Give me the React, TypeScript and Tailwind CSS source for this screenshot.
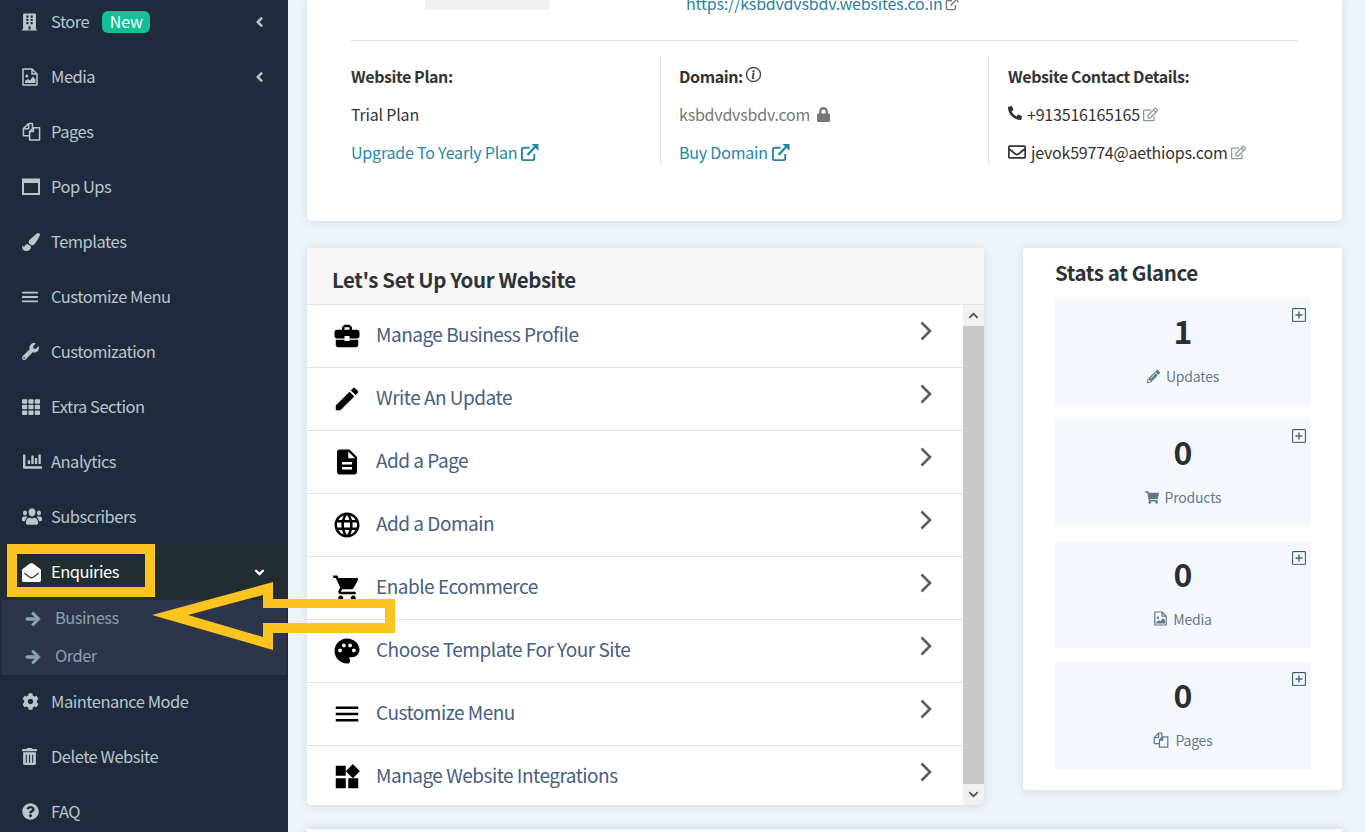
import React from "react";
import { FaBuilding, FaPaintBrush, FaBars, FaWrench, FaTh, FaChartBar, FaUsers, FaEnvelopeOpen, FaArrowRight, FaCog, FaTrashAlt, FaQuestionCircle, FaAngleLeft, FaAngleDown, FaPhoneAlt, FaRegEnvelope, FaRegEdit, FaLock, FaPencilAlt, FaShoppingCart, FaChevronUp, FaChevronDown } from "react-icons/fa";
import { BsInfoCircle, BsPlusSquare } from "react-icons/bs";
import { MdBusinessCenter, MdEdit, MdDescription, MdLanguage, MdShoppingCart, MdPalette, MdMenu, MdWidgets } from "react-icons/md";

const Files = ({ className = "" }: { className?: string }) => (
  <svg viewBox="0 0 20 20" className={className} fill="none" stroke="currentColor" strokeWidth="1.6" strokeLinejoin="round">
    <path d="M7 1.500h4V6M7 1.500 1.500 7v7.500H8M1.500 7H7V1.500" />
    <path d="M12 6h6.500v13H8v-9zM12 6v4H8" />
  </svg>
);

const FileImage = ({ className = "" }: { className?: string }) => (
  <svg viewBox="0 0 16 18" className={className}>
    <path d="M1 1h9l5 5v11H1zM10 1v5h5" fill="none" stroke="currentColor" strokeWidth="1.500" strokeLinejoin="round" />
    <circle cx="4.800" cy="8" r="1.500" fill="currentColor" />
    <path d="M3 15v-2l3-2 2 1.500 3-4 2.500 3v3.500z" fill="currentColor" />
  </svg>
);

const Ext = () => (
  <svg viewBox="0 0 20 20" className="inline-block w-[19px] h-[19px] ml-[3px] -mt-[4px]" fill="none" stroke="currentColor">
    <path strokeWidth="2" d="M15 11.500V16a2 2 0 0 1-2 2H4a2 2 0 0 1-2-2V7a2 2 0 0 1 2-2h6" />
    <path strokeWidth="2.400" d="M8 12.500 16 4" />
    <path fill="currentColor" stroke="none" d="M12 1h7.500v7.500z" />
  </svg>
);

const PopUp = ({ className = "" }: { className?: string }) => (
  <svg viewBox="0 0 18 17" className={className} fill="none" stroke="currentColor">
    <path strokeWidth="2" d="M1 4h16v12H1z" />
    <path strokeWidth="4" d="M0 2.500h18" />
  </svg>
);

const nav1: [string, React.ReactNode][] = [
  ["Store", <FaBuilding className="w-[15px] h-[18px]" />],
  ["Media", <FileImage className="w-[16px] h-[18px]" />],
  ["Pages", <Files className="w-[19px] h-[19px]" />],
  ["Pop Ups", <PopUp className="w-[18px] h-[17px]" />],
  ["Templates", <FaPaintBrush className="w-[18px] h-[18px]" />],
  ["Customize Menu", <FaBars preserveAspectRatio="none" className="w-[16px] h-[14px]" />],
  ["Customization", <FaWrench className="w-[17px] h-[17px]" />],
  ["Extra Section", <FaTh className="w-[18px] h-[18px]" />],
  ["Analytics", <FaChartBar className="w-[21px] h-[19px]" />],
  ["Subscribers", <FaUsers preserveAspectRatio="none" className="w-[20px] h-[19px]" />],
];
const nav2: [string, React.ReactNode][] = [
  ["Maintenance Mode", <FaCog className="w-[17px] h-[17px]" />],
  ["Delete Website", <FaTrashAlt className="w-[15px] h-[17px]" />],
  ["FAQ", <FaQuestionCircle className="w-[17px] h-[17px]" />],
];

function NavRow({ label, icon, chevron, badge }: { label: string; icon: React.ReactNode; chevron?: boolean; badge?: boolean }) {
  return (
    <div className="h-[55px] shrink-0 flex items-center text-[#b8c7ce]">
      <span className="w-[51px] pl-[22px] flex items-center shrink-0">{icon}</span>
      <span className="-mt-[2px]">{label}</span>
      {badge && <span className="ml-[13px] w-[48px] h-[22px] rounded-[6px] bg-[#12c097] text-white text-[16px] tracking-[-0.2px] leading-[21px] text-center">New</span>}
      {chevron && <FaAngleLeft className="ml-auto mr-[22px] w-[13px] h-[16px]" />}
    </div>
  );
}

const iconCls = "w-[30px] h-[30px]";
const tasks: [string, React.ReactNode][] = [
  ["Manage Business Profile", <MdBusinessCenter className={iconCls} />],
  ["Write An Update", <MdEdit className={iconCls} />],
  ["Add a Page", <MdDescription className={iconCls} />],
  ["Add a Domain", <MdLanguage className={iconCls} />],
  ["Enable Ecommerce", <MdShoppingCart className={iconCls} />],
  ["Choose Template For Your Site", <MdPalette className={iconCls} />],
  ["Customize Menu", <MdMenu className={iconCls} />],
  ["Manage Website Integrations", <MdWidgets className={iconCls} />],
];

const stats: [string, string, React.ReactNode][] = [
  ["1", "Updates", <FaPencilAlt className="w-[13px] h-[13px]" />],
  ["0", "Products", <FaShoppingCart className="w-[14px] h-[13px]" />],
  ["0", "Media", <FileImage className="w-[13px] h-[15px]" />],
  ["0", "Pages", <Files className="w-[16px] h-[16px]" />],
];

export default function App() {
  return (
    <div className="relative h-[832px] overflow-hidden flex bg-[#eff4fb] text-[16px] leading-[24px] font-['Noto_Sans_CJK_SC','Source_Sans_Pro',sans-serif]">
      <aside className="w-[288px] shrink-0 bg-[#1f2a3d] flex flex-col -mt-[6px] text-[16.5px] tracking-[-0.5px]">
        {nav1.map(([l, i], n) => (
          <NavRow key={l} label={l} icon={i} chevron={n < 2} badge={n === 0} />
        ))}
        <div className="relative h-[56px] shrink-0 flex items-center bg-[#222d32] text-white">
          <span className="w-[51px] pl-[22px] flex items-center shrink-0"><FaEnvelopeOpen className="w-[19px] h-[19px]" /></span>
          <span className="-mt-[2px]">Enquiries</span>
          <FaAngleDown className="ml-auto mr-[21px] w-[15px] h-[15px]" />
          <div className="absolute left-[7px] top-0 w-[148px] h-[53px] border-[10px] border-[#fcc41f]" />
        </div>
        <div className="h-[75px] shrink-0 mx-[2px] bg-[#2c3549] text-[#8aa0b4] flex flex-col">
          <div className="h-[38px] flex items-center pl-[23px]"><FaArrowRight stroke="currentColor" strokeWidth={30} className="w-[16px] h-[16px]" /><span className="ml-[14px] -mt-[4px]">Business</span></div>
          <div className="h-[37px] flex items-center pl-[23px]"><FaArrowRight stroke="currentColor" strokeWidth={30} className="w-[16px] h-[16px]" /><span className="ml-[14px] -mt-[4px]">Order</span></div>
        </div>
        <div className="-mt-[1px] flex flex-col">
          {nav2.map(([l, i]) => (
            <NavRow key={l} label={l} icon={i} />
          ))}
        </div>
      </aside>

      <main className="flex-1 min-w-0 pl-[19px] pr-[23px] flex flex-col">
        <section className="h-[221px] shrink-0 bg-white rounded-b-[5px] shadow-[0_1px_8px_rgba(90,110,140,0.2)] px-[44px] flex flex-col text-[#333] tracking-[-0.2px]">
          <div className="h-[41px] shrink-0 border-b border-[#e2e2e2] relative flex items-start">
            <div className="ml-[74px] w-[125px] h-[10px] bg-[#f1f1f1]" />
            <a className="ml-[136px] -mt-[9px] text-[#2f7f9f] whitespace-nowrap">https://ksbdvdvsbdv.websites.co.in<svg viewBox="0 0 20 20" className="inline-block w-[14px] h-[14px] ml-[3px] -mt-[3px] text-[#777]" fill="none" stroke="currentColor" strokeWidth="2"><path d="M15 11.500V16a2 2 0 0 1-2 2H4a2 2 0 0 1-2-2V7a2 2 0 0 1 2-2h6M8 12l8-8M12 2h6v6" /></svg></a>
          </div>
          <div className="mt-[15px] flex h-[109px]">
            <div className="w-[310px] border-r border-[#e2e2e2] flex flex-col gap-[14px] pt-[8px]">
              <b className="font-semibold tracking-[-0.4px]">Website Plan:</b>
              <span>Trial Plan</span>
              <a className="text-[#2587a8]">Upgrade To Yearly Plan<Ext /></a>
            </div>
            <div className="w-[328px] pl-[18px] border-r border-[#e2e2e2] flex flex-col gap-[14px] pt-[8px]">
              <b className="font-semibold tracking-[-0.4px] flex items-center">Domain:<BsInfoCircle stroke="currentColor" strokeWidth={0.4} className="ml-[3px] w-[15px] h-[15px] -mt-[3px]" /></b>
              <span className="text-[#777] flex items-center">ksbdvdvsbdv.com<FaLock className="ml-[7px] w-[13px] h-[15px]" /></span>
              <a className="text-[#2587a8]">Buy Domain<Ext /></a>
            </div>
            <div className="pl-[19px] flex flex-col gap-[14px] pt-[8px]">
              <b className="font-semibold tracking-[-0.4px]">Website Contact Details:</b>
              <span className="flex items-center"><FaPhoneAlt className="w-[14px] h-[14px] mr-[5px] -mt-[2px]" />+913516165165<FaRegEdit className="ml-[3px] w-[15px] h-[15px] text-[#8c98a4]" /></span>
              <span className="flex items-center"><FaRegEnvelope className="w-[18px] h-[18px] mr-[5px]" />jevok59774@aethiops.com<FaRegEdit className="ml-[3px] w-[15px] h-[15px] text-[#8c98a4]" /></span>
            </div>
          </div>
        </section>

        <div className="mt-[27px] flex items-start gap-[39px]">
          <section className="w-[677px] h-[557px] shrink-0 bg-white rounded-[4px] shadow-[0_1px_8px_rgba(90,110,140,0.2)] flex flex-col overflow-hidden">
            <h2 className="h-[57px] shrink-0 bg-[#f7f7f7] border-b border-[#e2e2e2] pl-[25px] pt-[5px] flex items-center text-[20.5px] tracking-[-0.42px] font-semibold text-[#2f3338]">Let's Set Up Your Website</h2>
            <div className="flex flex-1 min-h-0">
              <ul className="flex-1">
                {tasks.map(([l, i], n) => (
                  <li key={l} className={`h-[63px] flex items-center pl-[25px] pr-[31px] text-[19px] tracking-[-0.5px] text-[#46607f] border-b ${n < 7 ? "border-[#e2e2e2]" : "border-transparent"}`}>
                    <span className="text-black w-[44px] shrink-0">{i}</span>
                    <span className="-mt-[4px]">{l}</span>
                    <svg viewBox="0 0 12 20" className="ml-auto w-[12px] h-[20px] -mt-[10px] text-[#5e5e5e]" fill="none" stroke="currentColor" strokeWidth="2.6"><path d="M1.500 1.500 10 10l-8.500 8.500" /></svg>
                  </li>
                ))}
              </ul>
              <div className="w-[21px] shrink-0 flex flex-col bg-[#c8c8c8]">
                <div className="h-[21px] bg-[#f1f1f1] flex items-center justify-center text-[#505050]"><FaChevronUp className="w-[11px] h-[11px]" /></div>
                <div className="flex-1" />
                <div className="h-[21px] bg-[#f1f1f1] flex items-center justify-center text-[#505050]"><FaChevronDown className="w-[11px] h-[11px]" /></div>
              </div>
            </div>
          </section>

          <section className="w-[319px] h-[542px] shrink-0 bg-white rounded-[4px] shadow-[0_1px_8px_rgba(90,110,140,0.2)] pl-[32px] pr-[31px] flex flex-col">
            <h2 className="h-[47px] mb-[3px] shrink-0 flex items-center text-[20.5px] tracking-[-0.4px] font-semibold text-[#2f3338]">Stats at Glance</h2>
            <div className="flex flex-col gap-[14.300px]">
              {stats.map(([v, l, i]) => (
                <div key={l} className="relative h-[107px] bg-[#f4f8fc] flex flex-col items-center">
                  <span className="mt-[14px] text-[32px] leading-[36px] font-semibold text-[#2b2f33]">{v}</span>
                  <span className="mt-[18px] text-[14px] tracking-[-0.2px] leading-[20px] text-[#66788a] flex items-center gap-[6px]"><span className="text-[#5d7a8c]">{i}</span>{l}</span>
                  <BsPlusSquare stroke="currentColor" strokeWidth={0.4} className="absolute right-[5px] top-[10px] w-[14px] h-[14px] text-[#3d5168]" />
                </div>
              ))}
            </div>
          </section>
        </div>
        <div className="mt-[24px] h-[20px] shrink-0 bg-white shadow-[0_0_8px_rgba(90,110,140,0.3)]" />
      </main>

      <svg className="absolute left-0 top-0 w-[1365px] h-[832px] pointer-events-none" viewBox="0 0 1365 832">
        <path fillRule="evenodd" fill="#fcc41f" d="M152 615 273 582V599H395V633H273V650Z M188 615 263 637V623H385V608H263V595Z" />
      </svg>
    </div>
  );
}
